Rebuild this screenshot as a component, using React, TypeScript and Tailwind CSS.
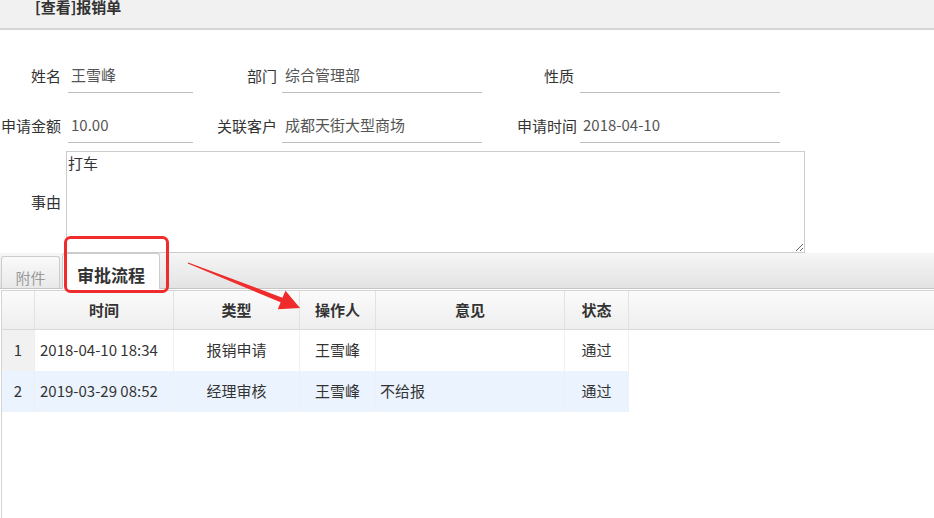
import React from 'react'

type Row = { no: number; time: string; type: string; user: string; note: string; status: string }

const rows: Row[] = [
  { no: 1, time: '2018-04-10 18:34', type: '报销申请', user: '王雪峰', note: '', status: '通过' },
  { no: 2, time: '2019-03-29 08:52', type: '经理审核', user: '王雪峰', note: '不给报', status: '通过' },
]

function Label({ className, children }: { className: string; children: React.ReactNode }) {
  return <div className={`${className} shrink-0 text-right text-[15px] text-[#333]`}>{children}</div>
}

function Field({ className, children }: { className: string; children?: React.ReactNode }) {
  return (
    <div className={`${className} h-[34px] shrink-0 flex items-center pl-[3px] border-b border-[#bdbdbd] text-[15px] text-[#555]`}>
      {children}
    </div>
  )
}

export default function App() {
  return (
    <div className="relative min-h-screen w-[934px] flex flex-col bg-white overflow-hidden font-['Noto_Sans_CJK_SC','Noto_Sans',sans-serif]">
      {/* title bar */}
      <div className="h-[30px] shrink-0 bg-[#f1f1f1] border-b-2 border-[#d5d5d5] pl-[35px]">
        <span className="block leading-[13px] text-[15px] font-bold text-[#333]">[查看]报销单</span>
      </div>

      {/* form */}
      <div className="mt-[29px] flex items-center">
        <Label className="w-[61px]">姓名</Label>
        <Field className="ml-[7px] w-[125px]">王雪峰</Field>
        <Label className="w-[84px]">部门</Label>
        <Field className="ml-[5px] w-[200px]">综合管理部</Field>
        <Label className="w-[92px]">性质</Label>
        <Field className="ml-[6px] w-[200px]" />
      </div>
      <div className="mt-[16px] flex items-center">
        <Label className="w-[61px]">申请金额</Label>
        <Field className="ml-[7px] w-[125px]">10.00</Field>
        <Label className="w-[84px]">关联客户</Label>
        <Field className="ml-[5px] w-[200px]">成都天街大型商场</Field>
        <Label className="w-[95px]">申请时间</Label>
        <Field className="ml-[3px] w-[200px]">2018-04-10</Field>
      </div>
      <div className="mt-[8px] flex items-center">
        <Label className="w-[61px]">事由</Label>
        <textarea
          readOnly
          defaultValue="打车"
          className="ml-[5px] w-[739px] h-[102px] border border-[#cccccc] px-[1px] pt-[2px] leading-[18px] text-[15px] text-[#333] resize outline-none"
        />
      </div>

      {/* tabs */}
      <div className="h-[36px] shrink-0 flex items-end pl-px bg-gradient-to-b from-[#f6f6f6] to-[#e3e3e3] border-b border-[#c5c5c5]">
        <div className="w-[59px] h-[32px] flex justify-center pt-[12px] leading-[18px] text-[15px] text-[#9a9a9a] border border-b-0 border-[#cccccc] rounded-t-[3px] bg-gradient-to-b from-[#fafafa] to-[#e9e9e9]">
          附件
        </div>
        <div className="ml-[2px] w-[98px] h-[36px] -mb-px flex justify-center pt-[9px] leading-[24px] text-[17px] font-bold text-[#333] border border-b-0 border-[#cccccc] rounded-t-[3px] bg-white">
          审批流程
        </div>
      </div>

      {/* grid */}
      <div className="mt-px ml-px flex-1 border-t border-l border-[#d4d4d4] text-[15px] text-[#333]">
        <div className="h-[39px] grid grid-cols-[33px_139px_126px_76px_189px_64px_1fr] bg-gradient-to-b from-[#fbfbfb] to-[#eeeeee] border-b border-[#dadada] font-bold">
          <div className="border-r border-[#e2e2e2]" />
          <div className="flex items-center justify-center border-r border-[#e2e2e2]">时间</div>
          <div className="flex items-center justify-center border-r border-[#e2e2e2]">类型</div>
          <div className="flex items-center justify-center border-r border-[#e2e2e2]">操作人</div>
          <div className="flex items-center justify-center border-r border-[#e2e2e2]">意见</div>
          <div className="flex items-center justify-center border-r border-[#e2e2e2]">状态</div>
          <div />
        </div>
        {rows.map(r => (
          <div
            key={r.no}
            className={`w-[627px] h-[41px] grid grid-cols-[33px_139px_126px_76px_189px_64px] ${r.no === 2 ? 'bg-[#ebf3fe]' : 'bg-white'}`}
          >
            <div className={`flex items-center justify-center border-r border-[#eeeeee] ${r.no === 2 ? 'bg-[#ebf3fe]' : 'bg-[#f1f1f1]'}`}>{r.no}</div>
            <div className="flex items-center pl-[5px] border-r border-[#f0f0f0]">{r.time}</div>
            <div className="flex items-center justify-center border-r border-[#f0f0f0]">{r.type}</div>
            <div className="flex items-center justify-center border-r border-[#f0f0f0]">{r.user}</div>
            <div className="flex items-center pl-[4px] border-r border-[#f0f0f0]">{r.note}</div>
            <div className="flex items-center justify-center border-r border-[#f0f0f0]">{r.status}</div>
          </div>
        ))}
      </div>

      {/* red annotation */}
      <svg className="absolute inset-0 pointer-events-none" width="934" height="518" viewBox="0 0 934 518">
        <rect x="65.5" y="237.5" width="102" height="54" rx="5" fill="none" stroke="#ef2b2b" strokeWidth="3" />
        <polygon
          fill="#ef2b2b"
          points="188.2,262.4 282.4,297.7 285.5,290.7 300,308 277.8,309.3 280.6,302.3 187.8,263.6"
        />
      </svg>
    </div>
  )
}
